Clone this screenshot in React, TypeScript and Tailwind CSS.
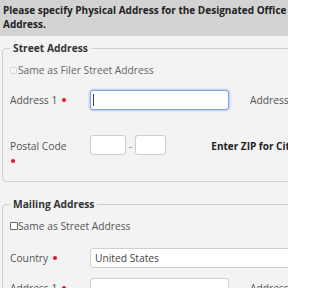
const Dot = ({ block = false }: { block?: boolean }) => (
  <span
    className={
      block
        ? "block w-[4px] h-[4px] rounded-full bg-[#e8141b] mt-[6px] ml-[1px]"
        : "inline-block w-[4px] h-[4px] rounded-full bg-[#e8141b] ml-[5px] align-middle"
    }
  />
);

const Box = ({ w, focus = false, children }: { w: string; focus?: boolean; children?: React.ReactNode }) => (
  <div
    className={`${w} h-[20px] bg-white rounded-[3px] border flex items-center shrink-0 ${
      focus ? "border-[#7ea6e6] shadow-[0_0_2px_1px_rgba(102,150,230,0.45)]" : "border-[#cfcfcf]"
    }`}
  >
    {children}
  </div>
);

export default function App() {
  return (
    <div className="w-[288px] h-[288px] overflow-hidden bg-[#f3f3f3]">
      <div className="w-[340px] font-['Open_Sans',sans-serif] text-[10.25px] text-[#555]">
        <div className="bg-[#d3d3d3] px-[3px] pt-[3px] pb-[5px] text-[10px] leading-[14px] font-bold text-[#222] w-[330px]">
          Please specify Physical Address for the Designated Office Address.
        </div>

        <fieldset className="mx-[2px] mt-[5px] border border-[#d2d2d2] rounded-[4px] pl-[7px] pr-0 pb-[18px]">
          <legend className="px-[3px] font-bold text-[#333] leading-[14px]">Street Address</legend>
          <div className="flex items-center mt-[8px] leading-[14px] text-[#666]">
            <span className="inline-block w-[7px] h-[7px] border border-[#d6d6d6] bg-[#f6f6f6] rounded-[1px] mr-px" />
            Same as Filer Street Address
          </div>
          <div className="flex items-center mt-[13px] leading-[14px]">
            <div className="w-[80px] shrink-0 flex items-center">
              Address 1<Dot />
            </div>
            <Box w="w-[139px]" focus>
              <span className="inline-block w-px h-[12px] bg-[#444] ml-[2px]" />
            </Box>
            <div className="ml-[21px]">Address 2</div>
          </div>
          <div className="flex items-start mt-[25px] leading-[14px]">
            <div className="w-[80px] shrink-0 pt-[4px]">
              Postal Code
              <Dot block />
            </div>
            <Box w="w-[36px]" />
            <span className="mx-[3px] mt-[4px] text-[#888]">-</span>
            <Box w="w-[31px]" />
            <div className="ml-[45px] mt-[4px] font-bold text-[#222] text-[10px]">Enter ZIP for City</div>
          </div>
        </fieldset>

        <fieldset className="mx-[2px] mt-[15px] border border-[#d2d2d2] rounded-[4px] pl-[7px] pr-0 pb-[14px]">
          <legend className="px-[3px] font-bold text-[#333] leading-[14px]">Mailing Address</legend>
          <div className="flex items-center mt-[8px] leading-[14px]">
            <span className="inline-block w-[8px] h-[8px] border border-[#666] bg-white rounded-[1px]" />
            Same as Street Address
          </div>
          <div className="flex items-center mt-[15px] leading-[14px]">
            <div className="w-[80px] shrink-0 flex items-center">
              Country<Dot />
            </div>
            <Box w="w-[240px]">
              <span className="ml-[4px] text-[#444]">United States</span>
            </Box>
          </div>
          <div className="flex items-center mt-[10px] leading-[14px]">
            <div className="w-[80px] shrink-0 flex items-center">
              Address 1<Dot />
            </div>
            <Box w="w-[139px]" />
            <div className="ml-[21px]">Address 2</div>
          </div>
        </fieldset>
      </div>
    </div>
  );
}
